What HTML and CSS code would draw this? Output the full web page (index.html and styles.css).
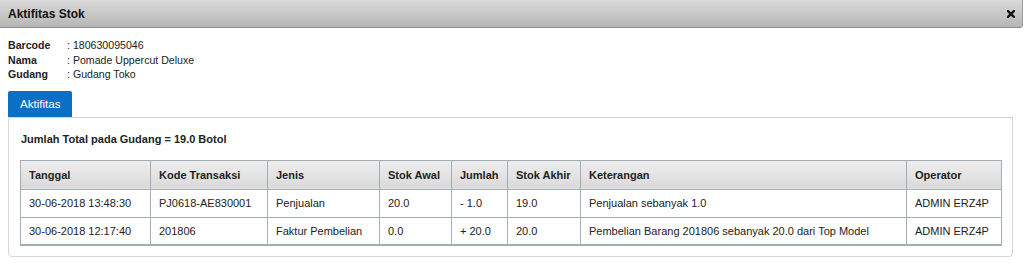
FILE: index.html
```html
<!DOCTYPE html>
<html lang="id">
<head>
  <meta charset="UTF-8" />
  <title>Aktifitas Stok</title>
  <link rel="stylesheet" href="styles.css">
</head>
<body>
  <div class="dialog">
    <div class="titlebar">
      <h1>Aktifitas Stok</h1>
      <span class="close" title="Tutup">
        <svg width="8" height="8" viewBox="0 0 8 8">
          <path d="M1 1 L7 7 M7 1 L1 7" stroke="#111" stroke-width="2.4" stroke-linecap="square"/>
        </svg>
      </span>
    </div>

    <div class="content">
      <div class="info">
        <span class="label">Barcode</span><span>: 180630095046</span>
        <span class="label">Nama</span><span>: Pomade Uppercut Deluxe</span>
        <span class="label">Gudang</span><span>: Gudang Toko</span>
      </div>

      <div class="tabs">
        <div class="tab active">Aktifitas</div>
      </div>

      <div class="panel">
        <div class="total">Jumlah Total pada Gudang = 19.0 Botol</div>
        <table class="grid">
          <colgroup>
            <col style="width:130px">
            <col style="width:117px">
            <col style="width:112px">
            <col style="width:72px">
            <col style="width:56px">
            <col style="width:73px">
            <col style="width:326px">
            <col style="width:95px">
          </colgroup>
          <thead>
            <tr>
              <th>Tanggal</th>
              <th>Kode Transaksi</th>
              <th>Jenis</th>
              <th>Stok Awal</th>
              <th>Jumlah</th>
              <th>Stok Akhir</th>
              <th>Keterangan</th>
              <th>Operator</th>
            </tr>
          </thead>
          <tbody>
            <tr>
              <td>30-06-2018 13:48:30</td>
              <td>PJ0618-AE830001</td>
              <td>Penjualan</td>
              <td>20.0</td>
              <td>- 1.0</td>
              <td>19.0</td>
              <td>Penjualan sebanyak 1.0</td>
              <td>ADMIN ERZ4P</td>
            </tr>
            <tr>
              <td>30-06-2018 12:17:40</td>
              <td>201806</td>
              <td>Faktur Pembelian</td>
              <td>0.0</td>
              <td>+ 20.0</td>
              <td>20.0</td>
              <td>Pembelian Barang 201806 sebanyak 20.0 dari Top Model</td>
              <td>ADMIN ERZ4P</td>
            </tr>
          </tbody>
        </table>
      </div>
    </div>
  </div>
</body>
</html>
```

FILE: styles.css
```css
* {
  box-sizing: border-box;
  margin: 0;
  padding: 0;
}

body {
  font-family: "Liberation Sans", Arial, sans-serif;
  font-size: 11px;
  color: #222;
  background: #fff;
}

.dialog {
  width: 1023px;
}

.titlebar {
  height: 28px;
  display: flex;
  align-items: center;
  justify-content: space-between;
  padding: 0 7px 0 8px;
  background: linear-gradient(#dadada, #b6b6b6);
  border-bottom: 1px solid #8e8e8e;
  border-right: 1px solid #9a9a9a;
  border-bottom-right-radius: 3px;
}

.titlebar h1 {
  font-size: 12px;
  font-weight: bold;
  color: #111;
}

.close {
  display: flex;
  cursor: pointer;
}

.content {
  padding: 10px 10px 0 8px;
}

.info {
  display: grid;
  grid-template-columns: 59px auto;
  font-size: 10.6px;
  line-height: 14.5px;
  margin-bottom: 9px;
}

.info .label {
  font-weight: bold;
}

.tabs {
  display: flex;
}

.tab {
  height: 26px;
  line-height: 26px;
  padding: 0 11px 0 12px;
  font-size: 11.6px;
  color: #fff;
  background: #0b6fc3;
  border-top-left-radius: 2px;
  border-top-right-radius: 2px;
}

.panel {
  width: 1005px;
  border: 1px solid #d6d6d6;
  border-radius: 0 0 4px 4px;
  padding: 14px 11px 10px;
}

.total {
  font-weight: bold;
  line-height: 15px;
  padding-left: 1px;
  margin-bottom: 13px;
}

.grid {
  width: 981px;
  table-layout: fixed;
  border-collapse: collapse;
  border: 1px solid #a3adb4;
  border-bottom: 2px solid #a3adb4;
}

.grid th,
.grid td {
  border: 1px solid #a3adb4;
  text-align: left;
  padding: 0 8px;
  white-space: nowrap;
}

.grid th {
  height: 29px;
  font-weight: bold;
  color: #222;
  background: linear-gradient(#ededed, #e4e4e4 50%, #d9d9d9);
}

.grid td {
  height: 28px;
  background: #fff;
}
```
